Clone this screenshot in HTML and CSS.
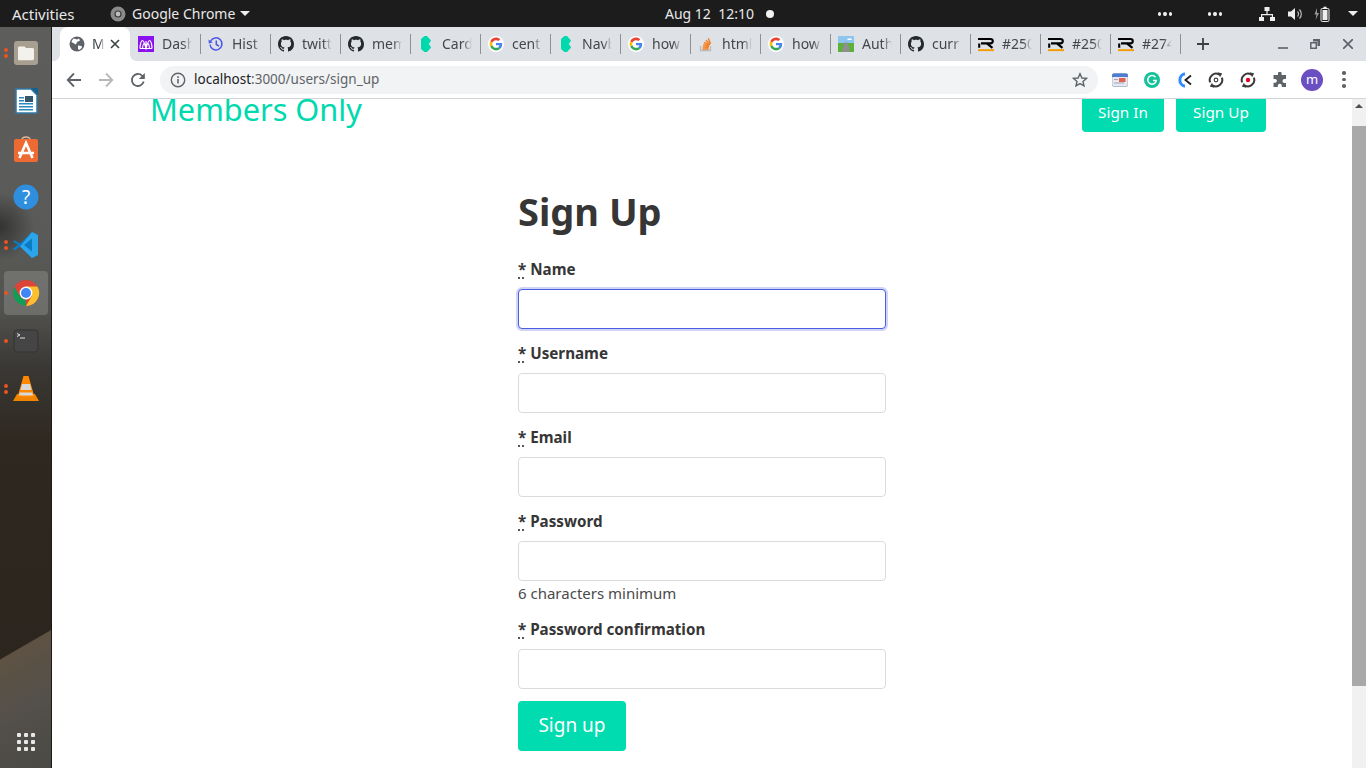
FILE: index.html
```html
<!DOCTYPE html>
<html lang="en">
<head>
<meta charset="utf-8">
<title>Members Only</title>
<link rel="stylesheet" href="styles.css">
</head>
<body>
<svg class="defs" aria-hidden="true">
  <symbol id="gh" viewBox="0 0 16 16"><path fill="#24292e" d="M8 0C3.58 0 0 3.58 0 8c0 3.54 2.29 6.53 5.47 7.59.4.07.55-.17.55-.38 0-.19-.01-.82-.01-1.49-2.01.37-2.53-.49-2.69-.94-.09-.23-.48-.94-.82-1.13-.28-.15-.68-.52-.01-.53.63-.01 1.08.58 1.23.82.72 1.21 1.87.87 2.33.66.07-.52.28-.87.51-1.07-1.78-.2-3.64-.89-3.64-3.95 0-.87.31-1.59.82-2.15-.08-.2-.36-1.02.08-2.12 0 0 .67-.21 2.2.82.64-.18 1.32-.27 2-.27.68 0 1.36.09 2 .27 1.53-1.04 2.2-.82 2.2-.82.44 1.1.16 1.92.08 2.12.51.56.82 1.27.82 2.15 0 3.07-1.87 3.75-3.65 3.95.29.25.54.73.54 1.48 0 1.07-.01 1.93-.01 2.2 0 .21.15.46.55.38A8.013 8.013 0 0016 8c0-4.42-3.58-8-8-8z"/></symbol>
  <symbol id="gg" viewBox="-6 -6 60 60"><circle cx="24" cy="24" r="30" fill="#fff"/><path fill="#EA4335" d="M24 9.5c3.54 0 6.71 1.22 9.21 3.6l6.85-6.85C35.9 2.38 30.47 0 24 0 14.62 0 6.51 5.38 2.56 13.22l7.98 6.19C12.43 13.72 17.74 9.5 24 9.5z"/><path fill="#4285F4" d="M46.98 24.55c0-1.57-.15-3.09-.38-4.55H24v9.02h12.94c-.58 2.96-2.26 5.48-4.78 7.18l7.73 6c4.51-4.18 7.09-10.36 7.09-17.65z"/><path fill="#FBBC05" d="M10.53 28.59c-.48-1.45-.76-2.99-.76-4.59s.27-3.14.76-4.59l-7.98-6.19C.92 16.46 0 20.12 0 24c0 3.88.92 7.54 2.56 10.78l7.97-6.19z"/><path fill="#34A853" d="M24 48c6.48 0 11.93-2.13 15.89-5.81l-7.73-6c-2.15 1.45-4.92 2.3-8.16 2.3-6.26 0-11.57-4.22-13.47-9.91l-7.98 6.19C6.51 42.62 14.62 48 24 48z"/></symbol>
  <symbol id="bm" viewBox="0 0 16 16"><path fill="#00d9ae" d="M6.500 0h2.500L13 4.500 10.800 8l2.400 3.500L9 16H6.500L3 13V3z"/></symbol>
  <symbol id="rr" viewBox="0 0 16 16"><path fill="none" stroke="#000" stroke-width="2.100" d="M0 3h12.300c1.700 0 2.500.8 2.500 2.100s-.8 2.300-2.500 2.300H3M1.200 11.800V7.400M8.800 7.400l5.700 4.400"/><rect y="13.200" width="16" height="1.900" fill="#f59b00"/></symbol>
  <symbol id="sync" viewBox="0 0 16 16"><path fill="none" stroke="#3a3a3a" stroke-width="2" d="M2.200 10.400A6.300 6.300 0 0 1 11.400 2.700M13.800 5.600A6.300 6.300 0 0 1 4.600 13.300"/><path fill="#3a3a3a" d="M9.800.2l4.400 1.300-2.200 3.700zM6.200 15.800l-4.400-1.300L4 10.800z"/></symbol>
</svg>

<header class="topbar">
  <span class="activities">Activities</span>
  <span class="app">
    <svg class="app-icon" viewBox="0 0 16 16"><circle cx="8" cy="8" r="7.500" fill="#8b8b8b"/><circle cx="8" cy="8" r="3.600" fill="#3a3a3a"/><circle cx="8" cy="8" r="2.400" fill="#bdbdbd"/></svg>
    Google Chrome
    <i class="caret"></i>
  </span>
  <span class="clock">Aug 12&nbsp; 12:10</span>
  <i class="clock-dot"></i>
  <span class="tray-dots first"><i></i><i></i><i></i></span>
  <span class="tray-dots"><i></i><i></i><i></i></span>
  <svg class="tray-net" viewBox="0 0 16 14"><path fill="#eee" d="M5.500 0h5v4h-5zM7.400 4h1.200v3H14v3h-1.200V8.200H3.200V10H2V7h5.400zM0 10h5v4H0zM11 10h5v4h-5z"/></svg>
  <svg class="tray-vol" viewBox="0 0 16 14"><path fill="#eee" d="M0 4.500h3L7 1v12L3 9.500H0z"/><path fill="none" stroke="#bbb" stroke-width="1.200" d="M9.500 4.500a3.500 3.500 0 0 1 0 5M11.500 2.500a6.500 6.500 0 0 1 0 9"/></svg>
  <svg class="tray-bat" viewBox="0 0 16 16"><path fill="#999" d="M3 2 .5 8.500h2L1.500 14 5 7H3z"/><rect x="7" y="2.500" width="8" height="13" rx="1.200" fill="none" stroke="#eee"/><rect x="9.500" y=".7" width="3" height="1.800" fill="#eee"/><rect x="8.500" y="4" width="5" height="10" fill="#eee"/></svg>
  <i class="caret tray-caret"></i>
</header>

<div class="desktop">
  <nav class="dock">
    <div class="dock-item"><i class="pips two"></i>
      <svg viewBox="0 0 32 32"><rect x="4" y="4" width="24" height="24" rx="3" fill="#a79f8f"/><path fill="#f3f1ec" d="M8 11c0-1 .6-1.600 1.600-1.600h5l1.400 1.600h6.400c1 0 1.600.6 1.600 1.600v9c0 1-.6 1.600-1.600 1.600H9.600C8.600 23.600 8 23 8 22z"/></svg>
    </div>
    <div class="dock-item">
      <svg viewBox="0 0 32 32"><path fill="#fff" stroke="#2f78a8" stroke-width="1.500" d="M6 4h15l6 6v18H6z"/><path fill="#17618f" d="M21 3l7 0 0 7z"/><path fill="#2a88c0" d="M9 12h5v1.500H9zM9 15h5v1.500H9zM9 18h14v1.500H9zM9 21h14v1.500H9zM9 24h14v1.500H9z"/><rect x="15" y="11" width="8" height="6" fill="#33566d"/></svg>
    </div>
    <div class="dock-item">
      <svg viewBox="0 0 32 32"><path fill="none" stroke="#d9b79c" stroke-width="1.500" d="M12 7c0-4 8-4 8 0"/><rect x="4" y="6" width="24" height="23" rx="2" fill="#ed6a33"/><path fill="none" stroke="#fff" stroke-width="2.600" d="M9.500 25 16 10l6.500 15M8 20h16"/></svg>
    </div>
    <div class="dock-item">
      <svg viewBox="0 0 32 32"><circle cx="16" cy="16" r="12.500" fill="#2f8fdf"/><text x="16" y="22.500" class="help-mark">?</text></svg>
    </div>
    <div class="dock-item"><i class="pips two"></i>
      <svg viewBox="0 0 32 32"><path fill="#0a7cc4" d="M22 3l6 3v20l-6 3-12-11.500-5.500 4.200L3 19.500l5-3.500-5-3.500 1.500-1.200L10 14.500z"/><path fill="#2ba4ea" d="M22 3l6 3v20l-6 3V9.500L14 16l8 6.500V29L10 17.500 22 3z"/></svg>
    </div>
    <div class="dock-item active"><i class="pips"></i>
      <svg viewBox="0 0 32 32"><circle cx="16" cy="16" r="13" fill="#db4437"/><path fill="#fbc02d" d="M16 9.500h11.400A13 13 0 0 1 16 29l5.800-10z"/><path fill="#0f9d58" d="M16 29A13 13 0 0 1 4.500 10l5.800 10 5.400 2.800z"/><circle cx="16" cy="16" r="6.400" fill="#fff"/><circle cx="16" cy="16" r="5" fill="#4285f4"/></svg>
    </div>
    <div class="dock-item"><i class="pips"></i>
      <svg viewBox="0 0 32 32"><rect x="4" y="5" width="24" height="22" rx="3" fill="#454545" stroke="#333"/><path fill="none" stroke="#ddd" d="M7 8.500l3 1.500-3 1.500M10 13h5"/></svg>
    </div>
    <div class="dock-item"><i class="pips two"></i>
      <svg viewBox="0 0 32 32"><path fill="#f08300" d="M3 28l4-7h18l4 7z"/><path fill="#ff8800" d="M13.500 3h5l6 21h-17z"/><path fill="#d8d8d8" d="M12 11h8l1.500 6h-11zM9.700 19.500h12.600l.7 3H9z"/></svg>
    </div>
    <div class="dock-apps"><i></i><i></i><i></i><i></i><i></i><i></i><i></i><i></i><i></i></div>
  </nav>

  <div class="browser">
    <div class="tabstrip">
      <div class="tab active">
        <svg class="fav" viewBox="0 0 16 16"><circle cx="8" cy="8" r="7.500" fill="#5f6368"/><path fill="#fff" d="M5 2.500l3 1 2-1 1 2-3 1.500-1 2.500-2-1-2.500-1.500C2.500 5 3.500 3.500 5 2.500zM9 9.500l3.500.5.500 1.500-2.500 2.500-1.500-1z"/></svg>
        <span class="tab-title">M</span>
        <svg class="tab-close" viewBox="0 0 10 10"><path stroke="#3c4043" stroke-width="1.600" d="M1 1l8 8M9 1l-8 8"/></svg>
      </div>
      <div class="tab">
        <svg class="fav" viewBox="0 0 16 16"><rect width="16" height="16" fill="#8a12ef"/><path fill="none" stroke="#fff" stroke-width="1.200" d="M2 12.500C2 9 3 4.500 4.500 4.500S7 9 8 12.500C9 9 10 4.500 11.500 4.500S14 9 14 12.500M4.500 12.500C4.500 10 5 8.500 5.800 7.500M11.500 12.500C11.500 10 11 8.500 10.200 7.500M8 12.500C8 9 8 7 8 5M2 12.500h12"/></svg>
        <span class="tab-title">Dash</span>
      </div>
      <div class="tab">
        <svg class="fav" viewBox="0 0 16 16"><path fill="none" stroke="#4a55e8" stroke-width="1.500" d="M2.700 5A6 6 0 1 1 2 8.500M8.300 4.500V8.500l2.700 1.600"/><path fill="#4a55e8" d="M.5 3.500 4.800 6.500.8 7.500z"/></svg>
        <span class="tab-title">Hist</span>
      </div>
      <div class="tab"><svg class="fav"><use href="#gh"/></svg><span class="tab-title">twitt</span></div>
      <div class="tab"><svg class="fav"><use href="#gh"/></svg><span class="tab-title">mem</span></div>
      <div class="tab"><svg class="fav"><use href="#bm"/></svg><span class="tab-title">Card</span></div>
      <div class="tab"><svg class="fav"><use href="#gg"/></svg><span class="tab-title">cent</span></div>
      <div class="tab"><svg class="fav"><use href="#bm"/></svg><span class="tab-title">Navb</span></div>
      <div class="tab"><svg class="fav"><use href="#gg"/></svg><span class="tab-title">how</span></div>
      <div class="tab">
        <svg class="fav" viewBox="0 0 16 16"><path fill="none" stroke="#bcbbbb" stroke-width="1.300" d="M2.500 10v4.500h10V10"/><path fill="none" stroke="#f48024" stroke-width="1.500" d="M4.500 13h6M4.700 11l6 .6M5.200 8.800l5.800 1.600M6.200 6.500l5.200 3M8 4.200l4 4.500M10.300 2.200l2.200 5.500"/></svg>
        <span class="tab-title">html</span>
      </div>
      <div class="tab"><svg class="fav"><use href="#gg"/></svg><span class="tab-title">how</span></div>
      <div class="tab">
        <svg class="fav" viewBox="0 0 16 16"><rect width="16" height="7" fill="#8cc6ee"/><rect y="7" width="16" height="9" fill="#5faf3c"/><path fill="#8f8f8f" d="M6.500 6.500h3L12 16H4z"/><path fill="#fff" d="M9.500 2.500h4v1.500h-4z"/></svg>
        <span class="tab-title">Auth</span>
      </div>
      <div class="tab"><svg class="fav"><use href="#gh"/></svg><span class="tab-title">curr</span></div>
      <div class="tab"><svg class="fav"><use href="#rr"/></svg><span class="tab-title">#250</span></div>
      <div class="tab"><svg class="fav"><use href="#rr"/></svg><span class="tab-title">#250</span></div>
      <div class="tab"><svg class="fav"><use href="#rr"/></svg><span class="tab-title">#274</span></div>
      <svg class="new-tab" viewBox="0 0 12 12"><path stroke="#3c4043" stroke-width="1.800" d="M6 0v12M0 6h12"/></svg>
      <svg class="win win-min" viewBox="0 0 10 10"><path stroke="#5f6368" stroke-width="1.600" d="M0 9h10"/></svg>
      <svg class="win win-max" viewBox="0 0 10 10"><path fill="#5f6368" d="M3 0h7v7H7.500V2.500H3z"/><path fill="none" stroke="#5f6368" stroke-width="1.500" d="M.8 3.800h5.500v5.500H.8z"/></svg>
      <svg class="win win-close" viewBox="0 0 10 10"><path stroke="#5f6368" stroke-width="1.700" d="M0 0l10 10M10 0L0 10"/></svg>
    </div>

    <div class="toolbar">
      <span class="tb-btn"><svg viewBox="0 0 16 16"><path fill="none" stroke="#5f6368" stroke-width="1.800" d="M15 8H2M8 1.500 1.700 8 8 14.500"/></svg></span>
      <span class="tb-btn"><svg viewBox="0 0 16 16"><path fill="none" stroke="#b5b7ba" stroke-width="1.800" d="M1 8h13M8 1.500 14.300 8 8 14.500"/></svg></span>
      <span class="tb-btn"><svg viewBox="0 0 16 16"><path fill="none" stroke="#5f6368" stroke-width="1.800" d="M13.700 9.500A6 6 0 1 1 12 3.600L14 5.500"/><path fill="#5f6368" d="M14.800 1v6h-6z"/></svg></span>
      <div class="omnibox">
        <svg class="info" viewBox="0 0 16 16"><circle cx="8" cy="8" r="6.700" fill="none" stroke="#5f6368" stroke-width="1.400"/><path fill="#5f6368" d="M7.200 7h1.600v4.500H7.200zM7.200 4.300h1.600v1.600H7.200z"/></svg>
        <span class="url"><b>localhost</b>:3000/users/sign_up</span>
        <svg class="star" viewBox="0 0 16 16"><path fill="none" stroke="#5f6368" stroke-width="1.400" d="M8 1.800l1.900 4.200 4.500.4-3.400 3 1 4.500L8 11.600l-4 2.300 1-4.500-3.400-3 4.500-.4z"/></svg>
      </div>
      <div class="extensions">
        <span class="tb-btn"><svg viewBox="0 0 16 16"><rect y="1.500" width="16" height="13" rx="2" fill="#e6e9ef" stroke="#98a5b8" stroke-width=".7"/><path fill="#4f7bd0" d="M0 3.500a2 2 0 0 1 2-2h12a2 2 0 0 1 2 2V5H0z"/><rect x="7" y="6" width="6.500" height="4" fill="#e2604f"/><path fill="#9aa6b8" d="M2 7h4v1H2zM2 10.500h10v1H2z"/></svg></span>
        <span class="tb-btn"><svg viewBox="0 0 16 16"><circle cx="8" cy="8" r="8" fill="#15c39a"/><path fill="none" stroke="#fff" stroke-width="1.500" d="M11.500 5.300A4.300 4.300 0 1 0 12.300 8.500H9"/></svg></span>
        <span class="tb-btn"><svg viewBox="0 0 16 16"><path fill="none" stroke="#2d8cff" stroke-width="3" d="M9 1.800A6.300 6.300 0 0 0 9 14.200"/><path fill="none" stroke="#222" stroke-width="1.900" d="M15 3.500 9.500 8l5.500 4.500"/></svg></span>
        <span class="tb-btn"><svg viewBox="0 0 16 16"><use href="#sync"/><circle cx="8" cy="8" r="1.800" fill="none" stroke="#444" stroke-width="1.200"/></svg></span>
        <span class="tb-btn"><svg viewBox="0 0 16 16"><use href="#sync"/><circle cx="8" cy="8" r="2.200" fill="#e8002a"/></svg></span>
        <span class="tb-btn"><svg viewBox="0 0 16 16"><path fill="#5f6368" d="M6 1.500a1.800 1.800 0 0 1 3.600 0V3H14v4h-1.500a2 2 0 0 0 0 4H14v4H9.800v-1.300a2 2 0 0 0-4 0V15H1.500v-4.300H3a1.900 1.900 0 0 0 0-3.800H1.500V3H6z"/></svg></span>
        <span class="tb-btn"><span class="avatar">m</span></span>
        <span class="tb-btn"><span class="kebab"><i></i><i></i><i></i></span></span>
      </div>
    </div>

    <div class="viewport">
      <main class="page">
        <div class="nav">
          <a class="brand">Members Only</a>
          <div class="nav-actions">
            <a class="btn btn-in">Sign In</a>
            <a class="btn btn-up">Sign Up</a>
          </div>
        </div>
        <form class="signup">
          <h1>Sign Up</h1>
          <div class="field">
            <label><abbr>*</abbr> Name</label>
            <div class="input focused"></div>
          </div>
          <div class="field">
            <label><abbr>*</abbr> Username</label>
            <div class="input"></div>
          </div>
          <div class="field">
            <label><abbr>*</abbr> Email</label>
            <div class="input"></div>
          </div>
          <div class="field">
            <label><abbr>*</abbr> Password</label>
            <div class="input"></div>
            <p class="hint">6 characters minimum</p>
          </div>
          <div class="field">
            <label><abbr>*</abbr> Password confirmation</label>
            <div class="input"></div>
          </div>
          <span class="submit">Sign up</span>
        </form>
      </main>
      <div class="scrollbar">
        <i class="arrow"></i>
        <div class="thumb"></div>
      </div>
    </div>
  </div>
</div>
</body>
</html>
```
FILE: styles.css
```css
* { box-sizing: border-box; }
html, body { height: 100%; }
body {
  margin: 0;
  overflow: hidden;
  font-family: "Noto Sans", "Open Sans", sans-serif;
  color: #363636;
  background: #fff;
}
i { display: block; }
.defs { width: 0; height: 0; position: absolute; }

/* GNOME top bar */
.topbar {
  height: 27px;
  background: #1c1c1c;
  color: #e9e9e9;
  display: flex;
  align-items: center;
  font-size: 14px;
  padding-left: 12px;
}
.activities { width: 98px; font-size: 15px; white-space: nowrap; }
.app { display: flex; align-items: center; width: 555px; }
.app-icon { width: 16px; height: 16px; margin-right: 6px; }
.caret {
  width: 0; height: 0;
  border-left: 5px solid transparent;
  border-right: 5px solid transparent;
  border-top: 5px solid #eee;
  margin-left: 5px;
}
.clock { width: 101px; white-space: nowrap; }
.clock-dot { width: 8px; height: 8px; border-radius: 50%; background: #f2f2f2; }
.tray-dots { display: flex; gap: 2px; margin-left: 36px; width: 14px; }
.tray-dots.first { margin-left: 384px; }
.tray-dots i { width: 4px; height: 4px; border-radius: 50%; background: #eee; }
.tray-net { width: 16px; height: 14px; margin-left: 37px; }
.tray-vol { width: 16px; height: 14px; margin-left: 13px; }
.tray-bat { width: 16px; height: 16px; margin-left: 10px; }
.tray-caret { margin-left: 18px; }

/* desktop */
.desktop { display: flex; height: 741px; }
.dock {
  width: 52px;
  flex: none;
  padding-top: 2px;
  display: flex;
  flex-direction: column;
  border-right: 1px solid #1b1a19;
  background:
    linear-gradient(150deg, transparent 0, transparent 82%, #5e5243 82.2%, #54504a 90%, #4a4945 100%),
    radial-gradient(circle at 0 200px, rgba(25,25,25,.6) 0, rgba(25,25,25,0) 34px),
    linear-gradient(180deg, #5d5d5b 0, #5a5a58 28%, #52524f 38%, #3a3835 46%, #2e2820 56%, #2d261f 75%, #2a251f 100%);
}
.dock-item {
  height: 48px;
  display: flex;
  align-items: center;
  justify-content: center;
  position: relative;
  flex: none;
}
.dock-item svg { width: 32px; height: 32px; }
.dock-item.active::before {
  content: "";
  position: absolute;
  left: 4px; top: 2px; right: 3px; bottom: 2px;
  border-radius: 4px;
  background: rgba(255,255,255,.16);
}
.dock-item.active svg { position: relative; }
.pips {
  position: absolute;
  left: 4px; top: 22px;
  width: 4px; height: 4px;
  border-radius: 50%;
  background: #e95420;
}
.pips.two { top: 19px; box-shadow: 0 6px 0 #e95420; }
.help-mark { font: 400 19px "Noto Sans", sans-serif; fill: #fff; text-anchor: middle; }
.dock-apps {
  margin: auto 0 17px 17px;
  display: grid;
  grid-template-columns: repeat(3, 4px);
  gap: 3px;
}
.dock-apps i { width: 4px; height: 4px; background: #e8e8e8; border-radius: 1px; }

/* browser */
.browser { flex: 1; display: flex; flex-direction: column; min-width: 0; }
.tabstrip {
  height: 34px;
  flex: none;
  background: #dee1e6;
  display: flex;
  align-items: center;
  padding-left: 8px;
}
.tab {
  width: 70px;
  height: 34px;
  flex: none;
  display: flex;
  align-items: center;
  padding-left: 8px;
  position: relative;
  font-size: 14px;
  color: #45474a;
}
.tab::after {
  content: "";
  position: absolute;
  right: -1px; top: 7px;
  width: 1px; height: 20px;
  background: #8e9094;
}
.tab.active {
  background: #fff;
  border-radius: 8px 8px 0 0;
  padding-left: 9px;
  color: #3c4043;
}
.tab.active::before,
.tab.active::after {
  content: "";
  position: absolute;
  top: auto;
  bottom: 0;
  width: 6px;
  height: 6px;
  background: radial-gradient(circle at 0 0, #dee1e6 5.500px, #fff 6px);
}
.tab.active::before { left: -6px; transform: scaleX(1); }
.tab.active::after {
  right: -6px;
  background: radial-gradient(circle at 100% 0, #dee1e6 5.500px, #fff 6px);
}
.fav { width: 16px; height: 16px; flex: none; }
.tab-title {
  margin: -2px 0 0 8px;
  width: 30px;
  overflow: hidden;
  white-space: nowrap;
  -webkit-mask-image: linear-gradient(90deg, #000 70%, transparent 100%);
  mask-image: linear-gradient(90deg, #000 70%, transparent 100%);
}
.tab.active .tab-title { width: 12px; margin-left: 7px; }
.tab-close { width: 10px; height: 10px; margin-left: 6px; flex: none; }
.new-tab { width: 12px; height: 12px; margin-left: 17px; }
.win { width: 10px; height: 10px; flex: none; }
.win-min { margin-left: 69px; }
.win-max { margin-left: 22px; }
.win-close { margin-left: 23px; }

.toolbar {
  height: 38px;
  flex: none;
  background: #fff;
  border-bottom: 1px solid #d3d5da;
  display: flex;
  align-items: center;
  padding-left: 6px;
}
.tb-btn {
  width: 32px;
  height: 32px;
  flex: none;
  display: flex;
  align-items: center;
  justify-content: center;
}
.tb-btn svg { width: 16px; height: 16px; }
.omnibox {
  flex: 1;
  height: 28px;
  margin-left: 6px;
  border-radius: 14px;
  background: #f1f3f4;
  display: flex;
  align-items: center;
  padding: 0 10px;
}
.info { width: 16px; height: 16px; flex: none; }
.url { margin: -2px 0 0 8px; font-size: 13.500px; color: #5f6368; flex: 1; white-space: nowrap; }
.url b { font-weight: 400; color: #202124; }
.star { width: 16px; height: 16px; flex: none; }
.extensions { display: flex; margin-left: 6px; padding-right: 6px; }
.avatar {
  width: 22px; height: 22px;
  border-radius: 50%;
  background: #6a4fc3;
  color: #fff;
  font-size: 13px;
  line-height: 21px;
  text-align: center;
}
.kebab { display: flex; flex-direction: column; gap: 3px; }
.kebab i { width: 3.500px; height: 3.500px; border-radius: 50%; background: #5f6368; }

/* page */
.viewport { flex: 1; display: flex; min-height: 0; overflow: hidden; background: #fff; }
.page { flex: 1; min-width: 0; margin-top: -7px; padding: 0 86px 0 98px; }
.nav {
  height: 40px;
  display: flex;
  justify-content: space-between;
  align-items: center;
}
.brand { font-size: 30.700px; color: #00d9ae; line-height: 36px; margin-top: -6px; white-space: nowrap; }
.nav-actions { display: flex; gap: 12px; }
.btn {
  height: 40px;
  background: #00dbb0;
  color: #fff;
  border-radius: 4px;
  font-size: 15.300px;
  line-height: 40px;
  text-align: center;
  white-space: nowrap;
}
.btn-in { width: 82px; }
.btn-up { width: 90px; }
.signup { width: 368px; margin: 55px 0 0 368px; }
h1 {
  margin: 0 0 22px;
  font-size: 38px;
  line-height: 48px;
  font-weight: 700;
  color: #363636;
}
.field { margin-bottom: 12px; }
label {
  display: block;
  height: 24px;
  margin-bottom: 8px;
  font-size: 15.200px;
  line-height: 24px;
  font-weight: 700;
  color: #363636;
  white-space: nowrap;
}
abbr { text-decoration: underline dotted #222; text-underline-offset: 3px; }
.input {
  height: 40px;
  background: #fff;
  border: 1px solid #dbdbdb;
  border-radius: 4px;
}
.input.focused {
  border-color: #485fdf;
  box-shadow: 0 0 0 2px rgba(72,80,223,.25);
}
.hint { margin: 0; font-size: 15px; line-height: 24px; color: #4a4a4a; }
.submit {
  display: block;
  width: 108px;
  height: 50px;
  background: #00dbb0;
  color: #fff;
  border-radius: 4px;
  font-size: 19px;
  line-height: 49px;
  text-align: center;
}

.scrollbar { width: 14px; flex: none; background: #f1f1f1; display: flex; flex-direction: column; align-items: center; padding-top: 5px; }
.arrow {
  width: 0; height: 0;
  border-left: 4px solid transparent;
  border-right: 4px solid transparent;
  border-bottom: 4px solid #505050;
}
.thumb { width: 100%; height: 560px; margin-top: 18px; background: #a9a9a9; }
```
